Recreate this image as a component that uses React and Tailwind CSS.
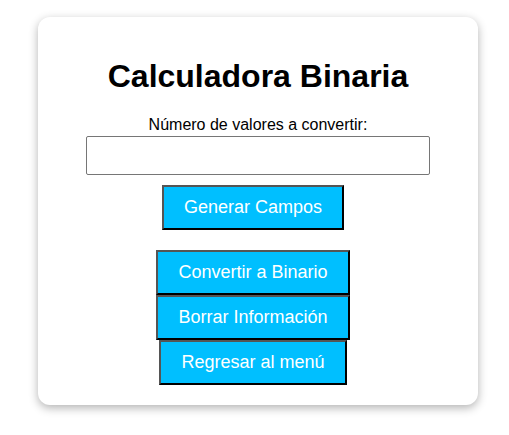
import React, { useState } from 'react';

const btn =
  "block mx-auto bg-[#00bfff] text-white text-[18px] leading-[21px] py-[10px] border-2 border-t-[#555] border-l-[#555] border-b-black border-r-black";

export default function App() {
  const [count, setCount] = useState('');

  return (
    <div className="min-h-[435px] bg-white pt-[17px] font-['Liberation_Sans',Arial,sans-serif] text-black">
      <div className="ml-[38px] w-[440px] h-[388px] bg-white rounded-xl shadow-[0_3px_10px_rgba(0,0,0,0.3)] px-5 pt-[41px] text-center">
        <h1 className="text-[32px] leading-[37px] font-bold mb-[21px]">Calculadora Binaria</h1>

        <label className="block text-[16px] leading-[18px]">Número de valores a convertir:</label>
        <input
          type="number"
          value={count}
          onChange={(e) => setCount(e.target.value)}
          className="block mx-auto mt-[2px] w-[344px] h-[39px] border border-[#767676] rounded-[2px] px-2"
        />

        <div className="pr-[10px]">
          <button className={btn + " mt-[10px] w-[182px]"}>Generar Campos</button>

          <div className="mt-5">
            <button className={btn + " w-[194px]"}>Convertir a Binario</button>
            <button className={btn + " w-[194px]"}>Borrar Información</button>
            <button className={btn + " w-[188px]"}>Regresar al menú</button>
          </div>
        </div>
      </div>
    </div>
  );
}
